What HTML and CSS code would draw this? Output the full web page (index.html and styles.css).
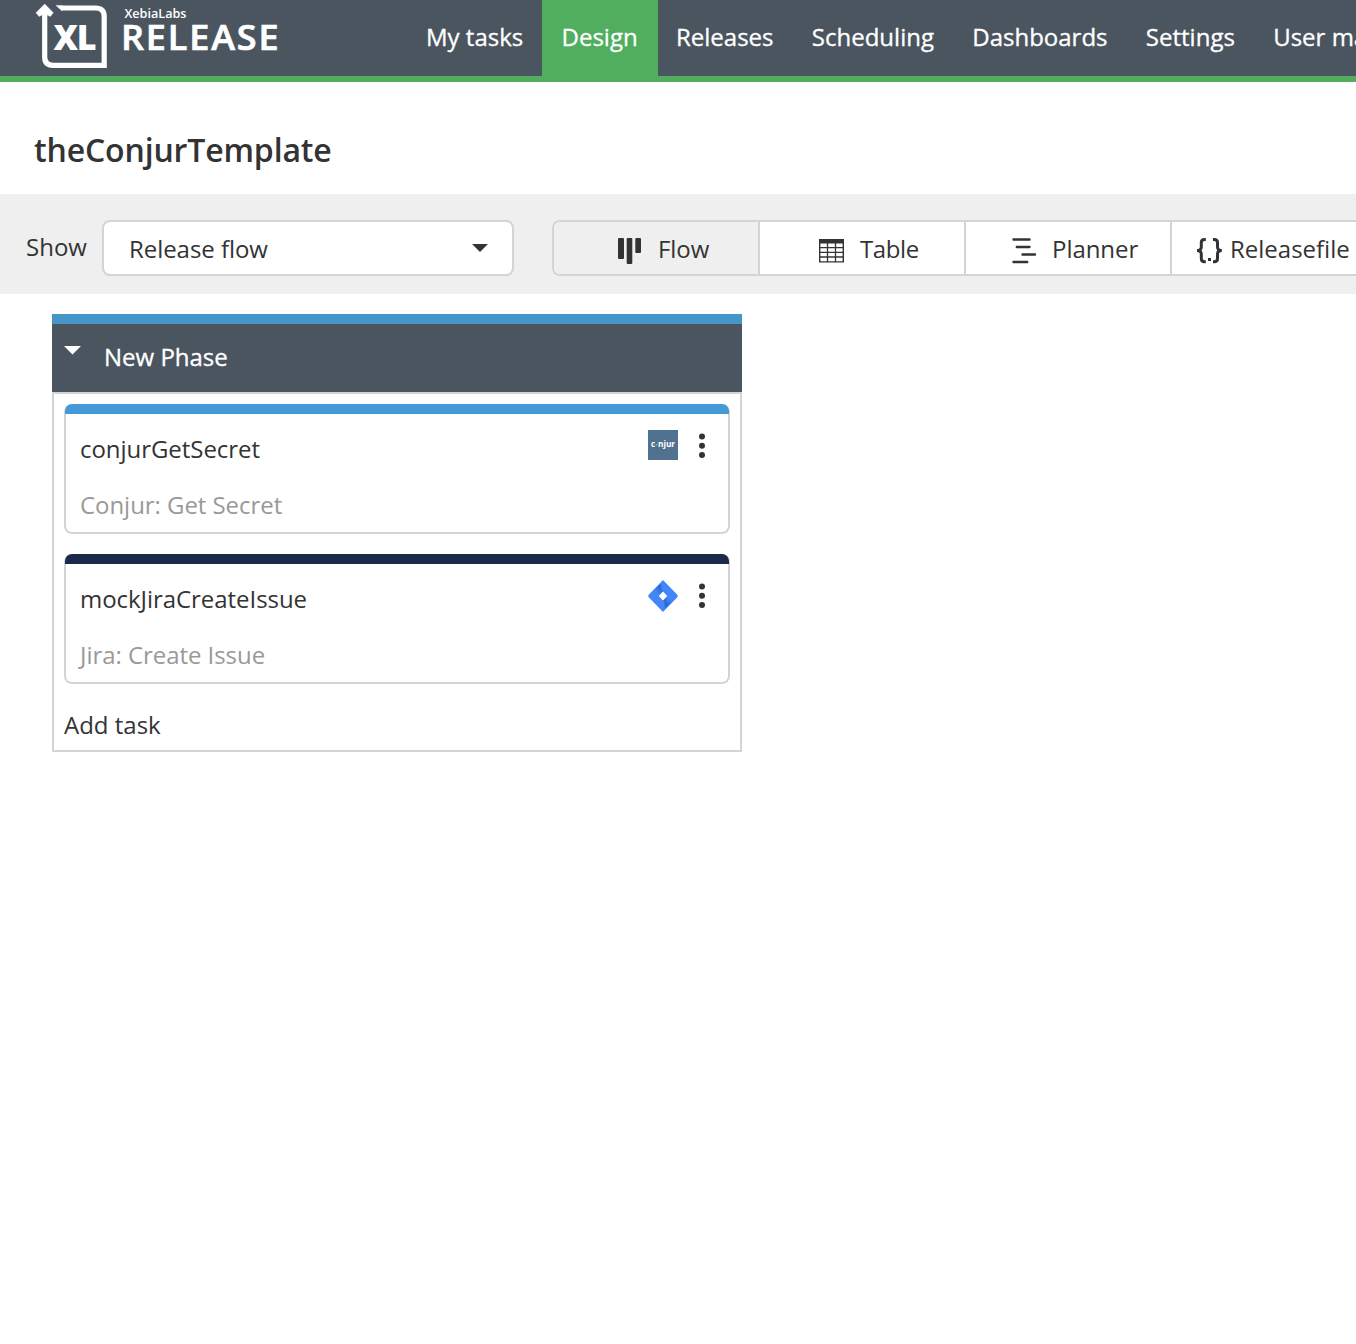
FILE: index.html
```html
<!DOCTYPE html>
<html lang="en">
<head>
<meta charset="utf-8">
<title>theConjurTemplate</title>
<link rel="stylesheet" href="styles.css">
</head>
<body>
<header class="topbar">
  <svg class="logo" width="250" height="76" viewBox="35 0 250 76">
    <path d="M44.7 10V57Q44.7 65.3 53 65.3H104.2V16.500Q104.200 8 95.700 8H61" fill="none" stroke="#fff" stroke-width="5.200"/>
    <path d="M56 5.400H62V10.600H61.500Z M44.700 4L53.300 12.800L50.300 16.500L47.300 15H42.100L39.100 16.500L36 12.800Z" fill="#fff" stroke="#fff" stroke-width=".4" stroke-linejoin="round"/>
    <text class="logo-xl" x="53.500" y="50" textLength="41.500" lengthAdjust="spacingAndGlyphs">XL</text>
    <text class="logo-small" x="124.500" y="17.500" textLength="62" lengthAdjust="spacingAndGlyphs">XebiaLabs</text>
    <text class="logo-name" x="121" y="50.300" textLength="159.500" lengthAdjust="spacingAndGlyphs">RELEASE</text>
  </svg>
  <nav class="nav">
    <a>My tasks</a>
    <a class="active">Design</a>
    <a>Releases</a>
    <a>Scheduling</a>
    <a>Dashboards</a>
    <a>Settings</a>
    <a>User management</a>
  </nav>
</header>
<h1 class="title">theConjurTemplate</h1>
<section class="toolbar">
  <label class="show">Show</label>
  <div class="select">
    <span>Release flow</span>
    <svg width="16" height="8"><path d="M0 0H16L8 8Z" fill="#333"/></svg>
  </div>
  <div class="views">
    <div class="view selected">
      <svg width="24" height="26" fill="#333"><rect x="0" y="0" width="6" height="21" rx="1"/><rect x="8.700" y="0" width="5.600" height="26" rx="1"/><rect x="17.300" y="0" width="5.700" height="15" rx="1"/></svg>
      <span>Flow</span>
    </div>
    <div class="view table">
      <svg width="25" height="24" fill="none" stroke="#333"><path d="M.7 .7H24.300V22.900H.7Z" stroke-width="1.400"/><path d="M0 2.300H25" stroke-width="4.500"/><path d="M1 8.700H24M1 13.300H24M1 18H24M8.500 4V23M16.500 4V23" stroke-width="1.300"/></svg>
      <span>Table</span>
    </div>
    <div class="view planner">
      <svg width="25" height="26" fill="none" stroke="#333" stroke-width="2.400" stroke-linecap="round"><path d="M1.500 1.500H17.500M4.800 9H17.500M10.500 16.500H23M1.500 24H15.200"/></svg>
      <span>Planner</span>
    </div>
    <div class="view file">
      <svg width="27" height="26" fill="none" stroke="#333" stroke-width="3"><path d="M9.800 1.500H8.500Q5.300 1.500 5.300 4.500V9Q5.300 12.500 1 12.500Q5.300 12.500 5.300 16V20.500Q5.300 23.700 8.500 23.700H9.800M17 1.500H18.300Q21.500 1.500 21.500 4.500V9Q21.500 12.500 25.800 12.500Q21.500 12.500 21.500 16V20.500Q21.500 23.700 18.300 23.700H17"/><rect x="12" y="20" width="3" height="3" fill="#333" stroke="none"/></svg>
      <span>Releasefile</span>
    </div>
  </div>
</section>
<main class="board">
  <section class="phase">
    <header class="phase-head">
      <svg width="18" height="9"><path d="M0 0H17L8.500 8.500Z" fill="#fff"/></svg>
      <span>New Phase</span>
    </header>
    <div class="phase-body">
      <article class="card">
        <div class="card-bar blue"></div>
        <div class="card-row">
          <span class="name">conjurGetSecret</span>
          <svg width="30" height="30"><rect width="30" height="30" fill="#50718f"/><g class="conjur-logo"><text x="3" y="17" textLength="4">c</text><text x="10" y="17" textLength="17" lengthAdjust="spacingAndGlyphs">njur</text></g><circle cx="8.500" cy="14.800" r="1" fill="#38bfa0"/></svg>
          <svg class="dots" width="6" height="26" fill="#333"><circle cx="3" cy="3.500" r="3"/><circle cx="3" cy="12.800" r="3"/><circle cx="3" cy="22.100" r="3"/></svg>
        </div>
        <div class="type">Conjur: Get Secret</div>
      </article>
      <article class="card">
        <div class="card-bar navy"></div>
        <div class="card-row">
          <span class="name">mockJiraCreateIssue</span>
          <svg width="30" height="32" viewBox="0 0 30 32">
            <defs>
              <linearGradient id="upper" x1="14" y1="5" x2="7" y2="11" gradientUnits="userSpaceOnUse"><stop offset="0" stop-color="#2358bd"/><stop offset="1" stop-color="#4286f8"/></linearGradient>
              <linearGradient id="lower" x1="16" y1="26" x2="23" y2="20" gradientUnits="userSpaceOnUse"><stop offset="0" stop-color="#2358bd"/><stop offset="1" stop-color="#4286f8"/></linearGradient>
            </defs>
            <path d="M15 0L29.500 15Q30 16 29.500 17L15 32L.5 17Q0 16 .5 15Z" fill="#4286f8"/>
            <path d="M13.500 4Q12 8 15 11.500L10.500 16L6 9.400Z" fill="url(#upper)"/>
            <path d="M16.500 28Q18 24 15 20.500L19.500 16L24 22.600Z" fill="url(#lower)"/>
            <path d="M15 11.500L19.300 16L15 20.500L10.700 16Z" fill="#fff"/>
          </svg>
          <svg class="dots" width="6" height="26" fill="#333"><circle cx="3" cy="3.500" r="3"/><circle cx="3" cy="12.800" r="3"/><circle cx="3" cy="22.100" r="3"/></svg>
        </div>
        <div class="type">Jira: Create Issue</div>
      </article>
      <div class="add">Add task</div>
    </div>
  </section>
</main>
</body>
</html>
```
FILE: styles.css
```css
* { box-sizing: border-box; }
body {
  margin: 0;
  min-height: 1344px;
  background: #fff;
  color: #333;
  font: 24px/32px "Open Sans", sans-serif;
  overflow: hidden;
}
svg { display: block; flex: none; }
.topbar {
  display: flex;
  height: 82px;
  padding-left: 35px;
  background: #4b555f;
  border-bottom: 6px solid #50ae5e;
  overflow: hidden;
}
.logo { margin-right: 121px; }
.logo text { fill: #fff; }
.logo-xl { font: 800 35px "Open Sans", sans-serif; letter-spacing: -1.5px; }
.logo-small { font: 600 12px "Open Sans", sans-serif; }
.logo-name { font: 600 35px "Open Sans", sans-serif; letter-spacing: 1.800px; stroke: #fff; stroke-width: .7px; }
.nav { display: flex; flex: none; }
.nav a {
  height: 76px;
  margin-right: -1.700px;
  padding: 21px 20px 0;
  color: #fff;
  white-space: nowrap;
  -webkit-text-stroke: .3px #fff;
}
.nav .active { background: #50ae5e; }
.title {
  height: 112px;
  margin: 0;
  padding: 46px 34px 0;
  font-size: 32px;
  line-height: 44px;
  font-weight: 600;
  letter-spacing: -.15px;
}
.toolbar {
  display: flex;
  height: 100px;
  padding: 26px 0 0 26px;
  background: #efefef;
  overflow: hidden;
}
.show { flex: none; width: 76px; padding-top: 11px; }
.select, .views {
  flex: none;
  display: flex;
  height: 56px;
  border: 2px solid #d4d4d4;
  border-radius: 8px;
  background: #fff;
}
.select {
  align-items: center;
  justify-content: space-between;
  width: 412px;
  padding: 2px 24px 0 25px;
  letter-spacing: -.05px;
}
.select svg { margin-top: -3px; }
.views {
  width: 826px;
  margin-left: 38px;
  overflow: hidden;
}
.view {
  display: flex;
  align-items: center;
  flex: none;
  width: 206px;
  padding: 1px 0 0 64px;
  border-right: 2px solid #d4d4d4;
  letter-spacing: -.05px;
}
.view svg { margin: 4px 16px 0 0; }
.view.selected { background: #efefef; }
.view.table { padding-left: 59px; letter-spacing: -.4px; }
.view.planner { padding-left: 46px; }
.view.planner svg { margin-right: 15px; }
.view.file { padding-left: 24px; letter-spacing: 0; }
.view.file svg { margin-right: 7px; }
.board { padding: 20px 52px; }
.phase { width: 690px; }
.phase-head {
  display: flex;
  height: 78px;
  padding: 17px 12px 0 11.500px;
  border-top: 10px solid #4496c7;
  background: #4b555f;
  color: #fff;
  -webkit-text-stroke: .3px #fff;
}
.phase-head svg { margin: 5px 22.500px 0 0; }
.phase-body {
  height: 360px;
  padding: 10px;
  border: 2px solid #d4d4d4;
}
.card {
  height: 130px;
  margin-bottom: 20px;
  border: 2px solid #d4d4d4;
  border-top: 0;
  border-radius: 8px;
  letter-spacing: -.05px;
}
.card-bar { height: 10px; margin: 0 -1px; border-radius: 7px 7px 0 0; }
.blue { background: #449ad6; }
.navy { background: #1b2a4b; }
.card-row { display: flex; height: 76px; padding: 16px 23px 0 14px; }
.name { padding-top: 3px; margin-right: auto; }
.dots { margin: 3px 0 0 21px; }
.conjur-logo { fill: #fff; font: 700 8px "Open Sans", sans-serif; }
.type { padding: 9px 0 0 14px; line-height: 12px; color: #999; }
.add { margin-top: 25px; }
```
